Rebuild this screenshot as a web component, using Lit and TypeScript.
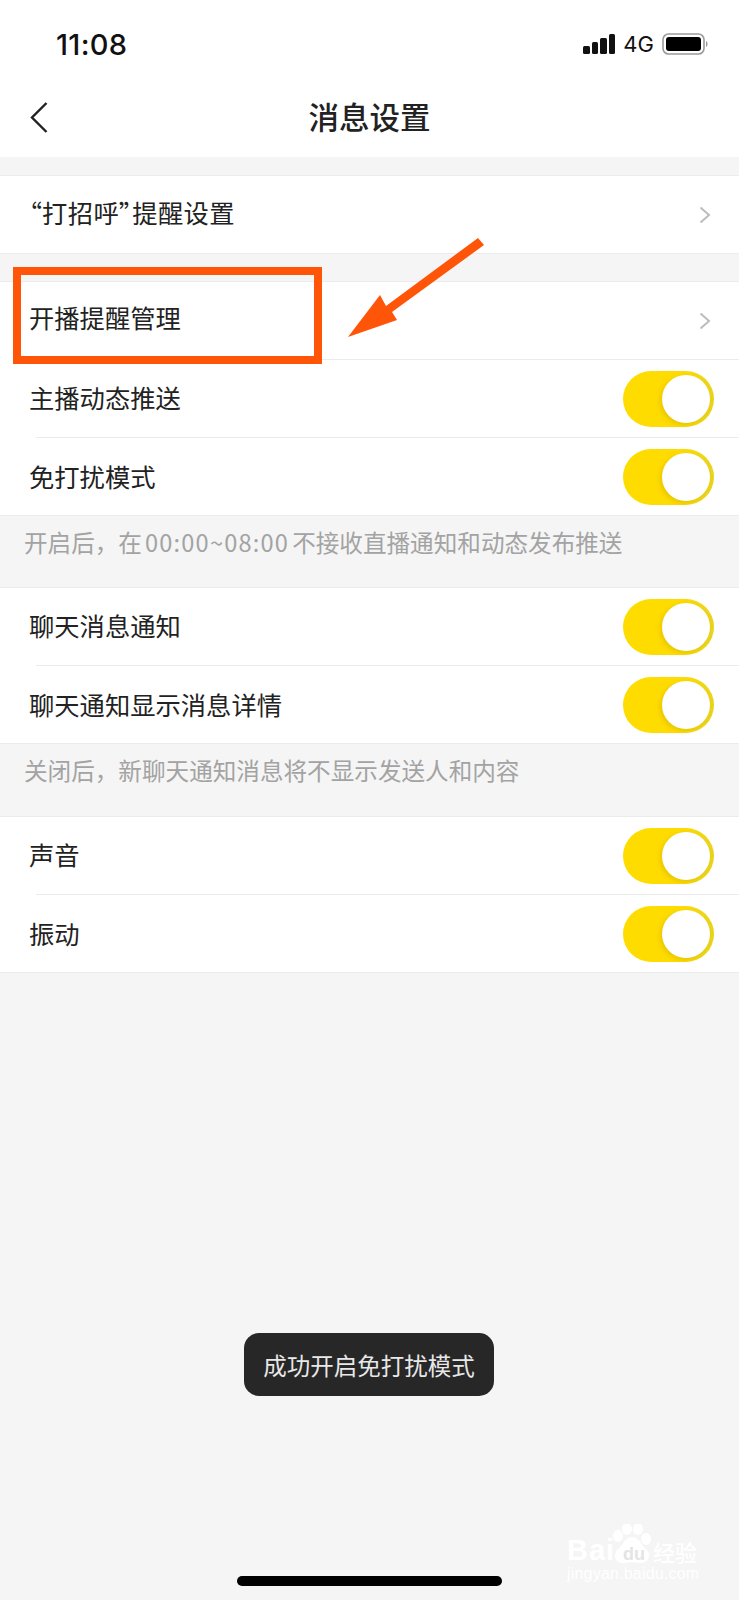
import { css, html, LitElement } from "lit";
import { customElement } from "lit/decorators.js";

type Row = { label: string; kind: "link" | "toggle" };

const first: Row[] = [{ label: "“打招呼”提醒设置", kind: "link" }];
const second: Row[] = [
  { label: "开播提醒管理", kind: "link" },
  { label: "主播动态推送", kind: "toggle" },
  { label: "免打扰模式", kind: "toggle" },
];
const third: Row[] = [
  { label: "聊天消息通知", kind: "toggle" },
  { label: "聊天通知显示消息详情", kind: "toggle" },
];
const fourth: Row[] = [
  { label: "声音", kind: "toggle" },
  { label: "振动", kind: "toggle" },
];

@customElement("app-root")
export class AppRoot extends LitElement {
  static styles = css`
    :host {
      display: block;
      position: relative;
      height: 1600px;
      overflow: hidden;
      background: #f5f5f5;
      color: #222;
      font-family: "Noto Sans CJK SC", "Noto Sans", sans-serif;
    }
    .head {
      background: #fff;
      height: 157px;
    }
    .status {
      height: 88px;
      display: flex;
      align-items: center;
      padding: 0 30px 0 56px;
      box-sizing: border-box;
      color: #111;
    }
    .time {
      flex: 1;
      font-family: Inter, sans-serif;
      font-size: 29px;
      font-weight: 500;
      letter-spacing: 0.3px;
    }
    .signal {
      display: flex;
      align-items: flex-end;
      gap: 2px;
      height: 20px;
    }
    .signal i {
      width: 6.5px;
      border-radius: 1.5px;
      background: #111;
    }
    .net {
      font-family: Inter, sans-serif;
      font-size: 22px;
      margin: 0 8px 0 8px;
    }
    .nav {
      height: 55px;
      display: flex;
      align-items: center;
      justify-content: center;
      position: relative;
    }
    .back {
      position: absolute;
      left: 30px;
      top: 14px;
    }
    .title {
      font-size: 30.5px;
      font-weight: 500;
    }
    .group {
      background: #fff;
      border-top: 1px solid #ececec;
      border-bottom: 1px solid #ececec;
    }
    .group.top {
      margin-top: 18px;
    }
    .group.next {
      margin-top: 27px;
    }
    .row {
      height: 78px;
      display: flex;
      align-items: center;
      justify-content: space-between;
      padding: 0 25px 0 29px;
      font-size: 25.3px;
      background: linear-gradient(#ececec, #ececec) right bottom / calc(100% - 36px) 1px no-repeat;
    }
    .row:last-child {
      height: 77px;
      background: none;
    }
    .row .label {
      margin-top: -5px;
    }
    .row.link:not(:last-child) .label {
      margin-top: -8px;
    }
    .row.toggle:last-child .label {
      margin-top: -2px;
    }
    .row .quoted {
      font-feature-settings: "palt";
      letter-spacing: 0.4px;
    }
    .row.link {
      padding-right: 28px;
    }
    .note {
      height: 71px;
      padding: 10px 0 0 24px;
      box-sizing: border-box;
      font-size: 23.6px;
      line-height: 32px;
      color: #a3a3a3;
    }
    .note.last {
      height: 72px;
    }
    .note .clock {
      margin: 0 3px;
      letter-spacing: 1.2px;
    }
    .switch {
      width: 91px;
      height: 56px;
      box-sizing: border-box;
      padding: 4px;
      border-radius: 28px;
      display: flex;
      justify-content: flex-end;
      background: linear-gradient(90deg, #ffdc00 62%, #e9d31d);
    }
    .switch span {
      width: 48px;
      height: 48px;
      border-radius: 50%;
      background: #fff;
      box-shadow: -2px 2px 5px rgba(120, 100, 0, 0.18);
    }
    .mark {
      position: absolute;
      left: 13px;
      top: 267px;
      width: 309px;
      height: 97px;
      box-sizing: border-box;
      border: 8px solid #fe5509;
    }
    .arrow {
      position: absolute;
      left: 340px;
      top: 235px;
    }
    .toast {
      position: absolute;
      left: 244px;
      top: 1333px;
      width: 250px;
      height: 63px;
      display: flex;
      align-items: center;
      justify-content: center;
      border-radius: 15px;
      background: #272727;
      color: #e8e8e8;
      font-size: 23.5px;
    }
    .home {
      position: absolute;
      left: 237px;
      top: 1576px;
      width: 265px;
      height: 10px;
      border-radius: 5px;
      background: #000;
    }
    .water {
      position: absolute;
      left: 566px;
      top: 1524px;
      width: 136px;
      height: 62px;
      color: #fff;
      font-family: "Liberation Sans", sans-serif;
    }
    .water span {
      position: absolute;
      white-space: nowrap;
      line-height: 1;
    }
    .water .bai {
      left: 1px;
      top: 12px;
      font-size: 29px;
      font-weight: 700;
      letter-spacing: 1px;
    }
    .water .du {
      left: 57px;
      top: 21px;
      font-size: 18px;
      font-weight: 700;
      color: #e4e4e4;
    }
    .water .jy {
      left: 87px;
      top: 16px;
      font-family: "Noto Sans CJK SC", sans-serif;
      font-size: 22px;
      font-weight: 500;
    }
    .water .url {
      left: 1px;
      top: 42px;
      font-size: 16px;
      letter-spacing: 0.2px;
    }
    .water svg {
      position: absolute;
      left: 44px;
      top: 0;
    }
  `;

  renderRow(row: Row) {
    return html`
      <div class="row ${row.kind}">
        <span class="label ${row.label.startsWith("“") ? "quoted" : ""}">${row.label}</span>
        ${row.kind === "link"
          ? html`<svg width="12" height="18" viewBox="0 0 12 18">
              <path d="M1.5 1.5 L10 9 L1.5 16.5" fill="none" stroke="#bcbcbc" stroke-width="2" />
            </svg>`
          : html`<div class="switch"><span></span></div>`}
      </div>
    `;
  }

  renderGroup(rows: Row[], extra: string) {
    return html`<div class="group ${extra}">${rows.map((r) => this.renderRow(r))}</div>`;
  }

  render() {
    return html`
      <div class="head">
        <div class="status">
          <span class="time">11:08</span>
          <div class="signal">
            <i style="height:8px"></i><i style="height:12px"></i><i style="height:16px"></i><i style="height:20px"></i>
          </div>
          <span class="net">4G</span>
          <svg width="47" height="22" viewBox="0 0 47 22">
            <rect x="1" y="1" width="41" height="20" rx="5.5" fill="none" stroke="#9a9a9a" stroke-width="1.6" />
            <rect x="4" y="4" width="35" height="14" rx="3" fill="#000" />
            <path d="M44 8 C46 9 46 13 44 14 Z" fill="#9a9a9a" />
          </svg>
        </div>
        <div class="nav">
          <svg class="back" width="18" height="31" viewBox="0 0 18 31">
            <path d="M16.5 1 L2 15.5 L16.5 30" fill="none" stroke="#222" stroke-width="2.4" />
          </svg>
          <span class="title">消息设置</span>
        </div>
      </div>
      ${this.renderGroup(first, "top")}
      ${this.renderGroup(second, "next")}
      <div class="note">开启后，在<span class="clock">00:00~08:00</span>不接收直播通知和动态发布推送</div>
      ${this.renderGroup(third, "")}
      <div class="note last">关闭后，新聊天通知消息将不显示发送人和内容</div>
      ${this.renderGroup(fourth, "")}

      <div class="mark"></div>
      <svg class="arrow" width="150" height="110" viewBox="340 235 150 110">
        <path
          d="M348 337 L380 295 L386 306 L478 238 L484 245 L392 312 L397 320 Z"
          fill="#fe5509"
        />
      </svg>
      <div class="toast">成功开启免打扰模式</div>
      <div class="water">
        <span class="bai">Bai</span>
        <svg width="44" height="42" viewBox="0 0 44 42">
          <g fill="#fff">
            <ellipse cx="8" cy="12" rx="5" ry="6" />
            <ellipse cx="17" cy="5" rx="5" ry="6" />
            <ellipse cx="28" cy="5" rx="5" ry="6" />
            <ellipse cx="36" cy="15" rx="5" ry="6" />
            <path d="M22 13 C30 13 31 22 37 26 C42 32 37 40 30 39 C25 38 19 38 14 39 C7 40 2 33 7 26 C13 22 14 13 22 13 Z" />
          </g>
        </svg>
        <span class="du">du</span>
        <span class="jy">经验</span>
        <span class="url">jingyan.baidu.com</span>
      </div>
      <div class="home"></div>
    `;
  }
}
